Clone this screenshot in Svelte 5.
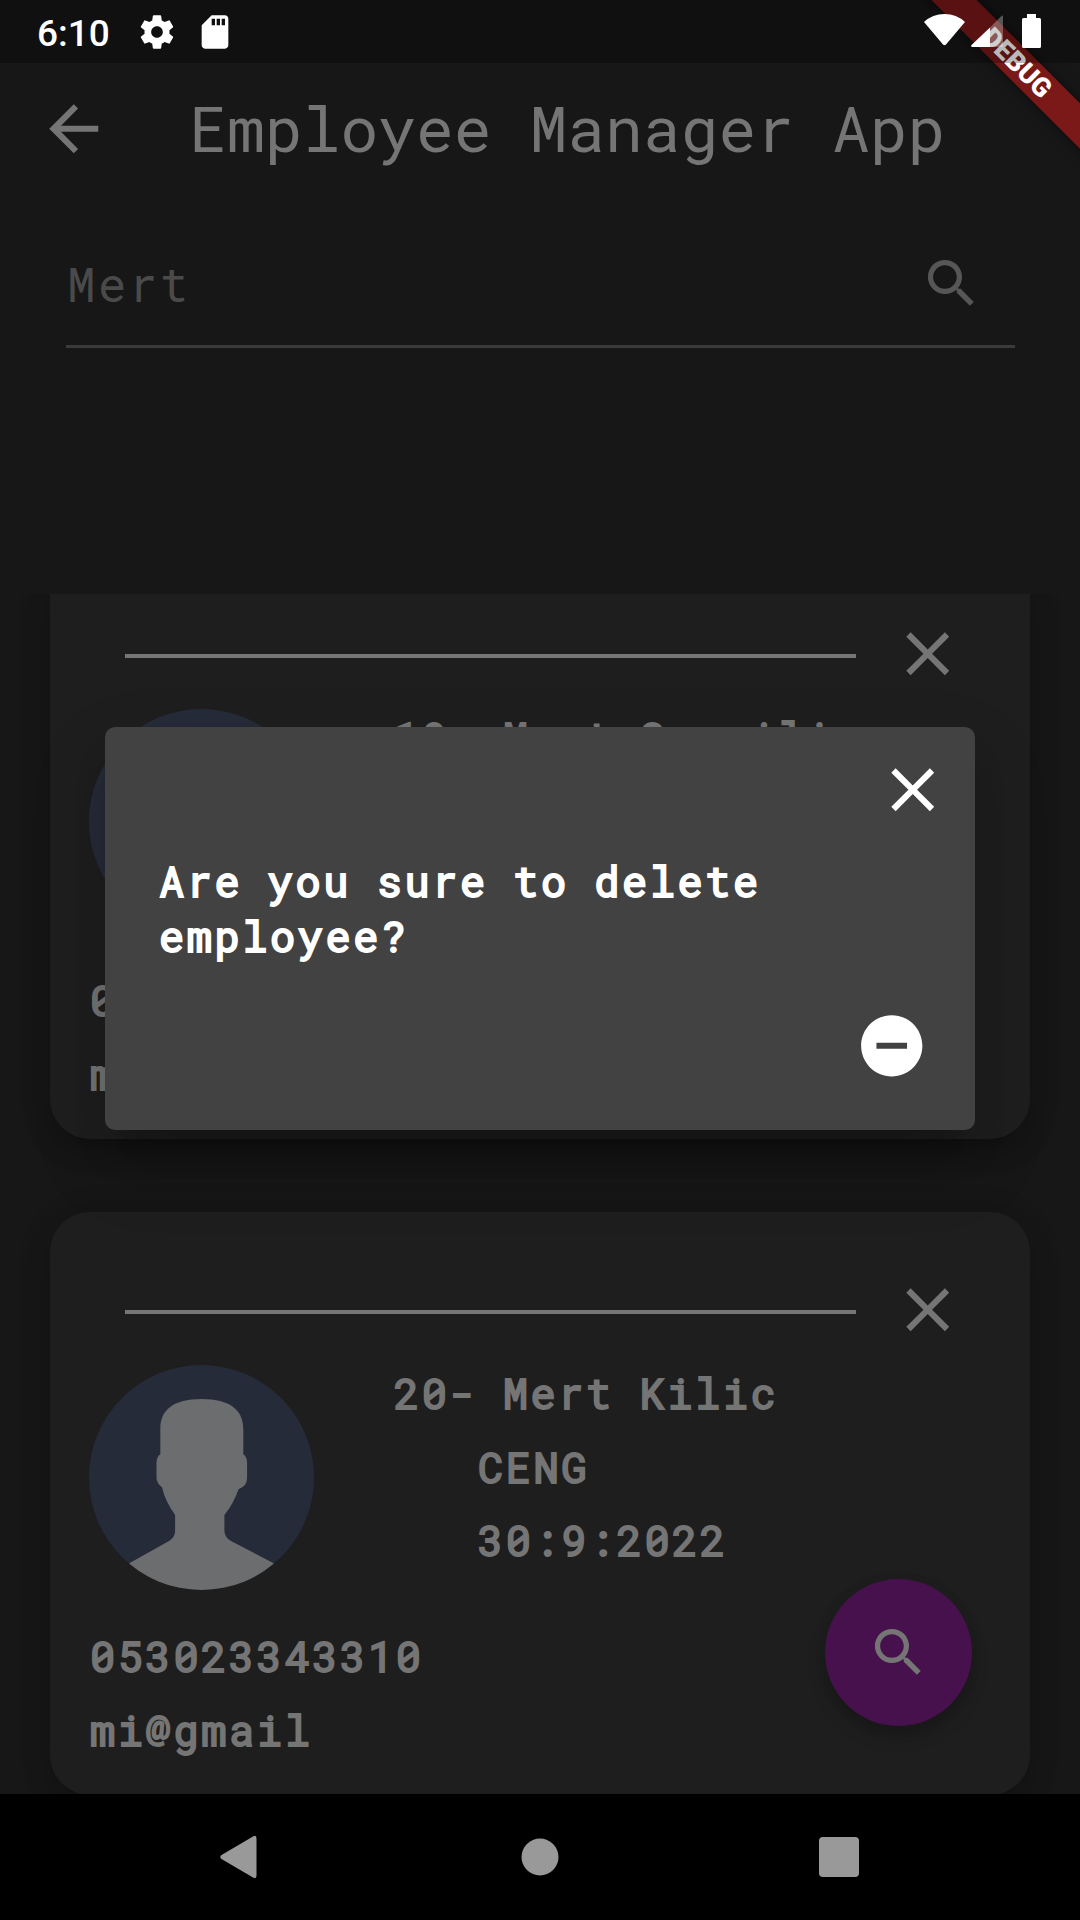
<script>
  const employees = [
    { id: 19, name: 'Mert Sevgili', job: 'CENG', date: '30:9:2022', phone: '053023343310', mail: 'mi@gmail' },
    { id: 20, name: 'Mert Kilic', job: 'CENG', date: '30:9:2022', phone: '053023343310', mail: 'mi@gmail' }
  ];
  const closePath =
    'M19 6.41 17.59 5 12 10.59 6.41 5 5 6.41 10.59 12 5 17.59 6.41 19 12 13.41 17.59 19 19 17.59 13.41 12z';
  const searchPath =
    'M15.5 14h-.79l-.28-.27A6.471 6.471 0 0 0 16 9.5 6.5 6.5 0 1 0 9.5 16c1.61 0 3.09-.59 4.23-1.57l.27.28v.79l5 4.99L20.49 19l-4.99-5zm-6 0C7.01 14 5 11.99 5 9.5S7.01 5 9.5 5 14 7.01 14 9.5 11.99 14 9.5 14z';
</script>

<div class="screen">
  <header class="status">
    <span class="clock">6:10</span>
    <svg class="gear" viewBox="0 0 24 24"><path d="M19.43 12.98c.04-.32.07-.64.07-.98s-.03-.66-.07-.98l2.11-1.65c.19-.15.24-.42.12-.64l-2-3.46c-.12-.22-.39-.3-.61-.22l-2.49 1c-.52-.4-1.08-.73-1.69-.98l-.38-2.65C14.46 2.18 14.25 2 14 2h-4c-.25 0-.46.18-.49.42l-.38 2.65c-.61.25-1.17.59-1.69.98l-2.49-1c-.23-.09-.49 0-.61.22l-2 3.46c-.13.22-.07.49.12.64l2.11 1.65c-.04.32-.07.65-.07.98s.03.66.07.98l-2.11 1.65c-.19.15-.24.42-.12.64l2 3.46c.12.22.39.3.61.22l2.49-1c.52.4 1.08.73 1.69.98l.38 2.65c.03.24.24.42.49.42h4c.25 0 .46-.18.49-.42l.38-2.65c.61-.25 1.17-.59 1.69-.98l2.49 1c.23.09.49 0 .61-.22l2-3.46c.12-.22.07-.49-.12-.64l-2.11-1.65zM12 15.5c-1.93 0-3.5-1.57-3.5-3.5s1.57-3.5 3.5-3.5 3.5 1.57 3.5 3.5-1.57 3.5-3.5 3.5z" /></svg>
    <svg class="sd" viewBox="0 0 24 24"><path d="M18 2h-8L4.02 8 4 20c0 1.100.9 2 2 2h12c1.100 0 2-.9 2-2V4c0-1.100-.9-2-2-2zm-6 6h-2V4h2v4zm3 0h-2V4h2v4zm3 0h-2V4h2v4z" /></svg>
    <div class="right">
      <svg class="wifi" viewBox="0 0 41 32"><path d="M0 8Q8.500 0 20.500 0T41 8L22 30.500Q20.500 32 19 30.500z" /></svg>
      <svg class="signal" viewBox="0 0 32 32"><path opacity=".3" d="M32 1.500Q32-.5 30 1.500L19 12.500V32H32z" /><path d="M19 12.500V32H1Q-.5 31.500.5 30z" /></svg>
      <svg class="battery" viewBox="0 0 19 34"><path d="M5 0h9v4h3.500Q19 4 19 5.500v27q0 1.500-1.500 1.500h-16Q0 34 0 32.500v-27Q0 4 1.500 4H5z" /></svg>
    </div>
  </header>

  <div class="appbar">
    <svg class="back" viewBox="0 0 24 24"><path d="M20 11H7.830l5.590-5.590L12 4l-8 8 8 8 1.410-1.410L7.830 13H20v-2z" /></svg>
    <h1>Employee Manager App</h1>
  </div>

  <div class="field">
    <span>Mert</span>
    <svg viewBox="0 0 24 24"><path d={searchPath} /></svg>
  </div>

  <main class="list">
    {#each employees as e}
      <article class="card">
        <div class="top">
          <div class="rule"></div>
          <svg viewBox="0 0 24 24"><path d={closePath} /></svg>
        </div>
        <div class="body">
          <svg class="avatar" viewBox="0 0 225 225">
            <path d="M71.300 64C71.300 45 84 34 112.600 34S154.300 45 154.300 64V89.300Q158.100 92 158.100 98V113Q158.100 121 149.500 124.300Q145 138 135.400 150V166Q136 173 142 176L184.600 198.300V225H40.300V198.300L80 176Q86.100 172 86.100 166V150Q76 136 73 122.300Q67.500 118 67.500 113V98Q67.500 92 71.300 89.300z" />
          </svg>
          <div class="info">
            <p>{e.id}- {e.name}</p>
            <p class="sub">{e.job}</p>
            <p class="sub">{e.date}</p>
          </div>
        </div>
        <div class="contact">
          <p>{e.phone}</p>
          <p>{e.mail}</p>
        </div>
      </article>
    {/each}
  </main>

  <button class="fab" aria-label="Search">
    <svg viewBox="0 0 24 24"><path d={searchPath} /></svg>
  </button>

  <nav>
    <svg viewBox="0 0 64 64"><path d="M47.500 13.500V50.500Q47.500 54.500 44 52.500L12.500 34Q10 32 12.500 30L44 11.500Q47.500 9.500 47.500 13.500z" /></svg>
    <svg viewBox="0 0 64 64"><circle cx="32" cy="32" r="18.500" /></svg>
    <svg viewBox="0 0 64 64"><rect x="12" y="12" width="40" height="40" rx="4" /></svg>
  </nav>

  <div class="overlay">
    <section class="dialog">
      <div class="dtop"><svg viewBox="0 0 24 24"><path d={closePath} /></svg></div>
      <p class="question">Are you sure to delete employee?</p>
      <div class="actions">
        <svg viewBox="0 0 24 24"><path d="M12 2C6.480 2 2 6.480 2 12s4.480 10 10 10 10-4.480 10-10S17.520 2 12 2zm5 11H7v-2h10v2z" /></svg>
      </div>
    </section>
  </div>

  <div class="corner"><div class="banner">DEBUG</div></div>
</div>

<style>
  :global(body) { margin: 0; background: #000; }
  .screen {
    position: relative;
    width: 1080px;
    height: 1920px;
    overflow: hidden;
    display: flex;
    flex-direction: column;
    background: #171717;
    color: #757575;
    font-family: 'Roboto Mono', 'DejaVu Sans Mono', monospace;
  }
  svg { display: block; flex: none; fill: currentColor; }
  p, h1 { margin: 0; }

  .status {
    position: relative;
    z-index: 4;
    flex: none;
    height: 63px;
    box-sizing: border-box;
    display: flex;
    align-items: flex-start;
    padding: 0 39px 0 37px;
    background: rgba(0, 0, 0, 0.27);
    color: #fff;
  }
  .clock { width: 100px; font: 500 37px/67px Roboto, sans-serif; }
  .gear { width: 40px; height: 40px; margin-top: 12px; }
  .sd { width: 40px; height: 40px; margin: 12px 0 0 18px; }
  .right { margin-left: auto; display: flex; padding-top: 14px; }
  .wifi { width: 41px; height: 32px; }
  .signal { width: 32px; height: 32px; margin: 1px 0 0 6px; }
  .battery { width: 19px; height: 34px; margin-left: 19px; }

  .appbar { flex: none; height: 131px; display: flex; align-items: center; padding-left: 36.500px; }
  .back { width: 73.500px; height: 73.500px; }
  h1 { margin: -2px 0 0 79.200px; font-size: 63px; line-height: 80px; font-weight: 400; white-space: nowrap; }

  .field {
    flex: none;
    height: 151px;
    margin: 0 65.500px;
    border-bottom: 3px solid #3a3a3a;
    display: flex;
    justify-content: space-between;
    align-items: center;
    color: #4a4a4a;
  }
  .field span { font-size: 47.250px; letter-spacing: 2.600px; padding: 28px 0 0 1.500px; }
  .field svg { width: 63px; height: 63px; margin: 28px 32px 0 0; color: #565656; }

  .list { height: 1200px; margin-top: 246px; overflow: hidden; flex: none; display: flex; flex-direction: column; gap: 73px; }
  .card {
    flex: none;
    width: 980px;
    height: 583px;
    margin-left: 50px;
    border-radius: 40px;
    background: #1e1e1e;
    box-shadow: 0 14px 28px -4px rgba(0, 0, 0, 0.26), 0 4px 36px rgba(0, 0, 0, 0.1);
  }
  .card:first-child { margin-top: -38px; }
  .top { display: flex; align-items: center; padding: 60.500px 0 0 75px; gap: 34.800px; }
  .rule { width: 731px; height: 4px; margin-top: 5px; background: #757575; }
  .top svg { width: 73.500px; height: 73.500px; }
  .body { display: flex; height: 263px; margin-top: 10.400px; padding-left: 39px; }
  .avatar { width: 225px; height: 225px; margin-top: 8.600px; border-radius: 50%; background: #262b39; color: #6b6d6e; }
  .info { margin-left: 80px; }
  /* Emboldened regular weight: outlined glyphs with tighter word gaps */
  .card p, .question {
    font-size: 42px;
    font-weight: 400;
    letter-spacing: 2.600px;
    word-spacing: -2.200px;
    -webkit-text-stroke: 1.900px currentColor;
  }
  .card p { line-height: 73.300px; white-space: nowrap; }
  .info .sub { margin-left: 84px; }
  .contact { padding-left: 40px; }

  .fab {
    position: absolute;
    left: 825px;
    top: 1578.500px;
    width: 147px;
    height: 147px;
    padding: 0;
    border: 0;
    border-radius: 50%;
    display: grid;
    place-items: center;
    background: #46114d;
    color: #757575;
    box-shadow: 0 10px 18px rgba(0, 0, 0, 0.2), 0 2px 14px rgba(0, 0, 0, 0.06);
  }
  .fab svg { width: 63px; height: 63px; }

  nav { flex: none; height: 126px; background: #000; color: #999; display: flex; align-items: center; justify-content: center; gap: 235px; padding-right: 1px; }
  nav svg { width: 64px; height: 64px; }

  .overlay { position: absolute; inset: 63px 0 126px; overflow: hidden; display: flex; align-items: center; justify-content: center; }
  .dialog {
    width: 870px;
    height: 403.500px;
    border-radius: 10px;
    background: #424242;
    color: #fff;
    box-shadow: 0 28px 36px -12px rgba(0, 0, 0, 0.25), 0 32px 80px rgba(0, 0, 0, 0.14);
  }
  .dtop { display: flex; justify-content: flex-end; padding: 26px 26px 0 0; }
  .dtop svg, .actions svg { width: 73.500px; height: 73.500px; }
  .question { margin: 26.500px 0 0 54px; line-height: 55px; width: 700px; }
  .card .info p, .question { letter-spacing: 2.550px; }
  .actions { display: flex; justify-content: flex-end; padding: 46.500px 47px 0 0; }

  .corner { position: absolute; right: 0; top: 0; width: 200px; height: 200px; overflow: hidden; z-index: 3; }
  .banner {
    position: absolute;
    left: -13px;
    top: 47px;
    width: 300px;
    height: 32px;
    transform: rotate(45deg);
    background: #7b1818;
    color: #fff;
    text-align: center;
    font: 900 26.800px/32px Roboto, sans-serif;
    box-shadow: 0 0 14px rgba(0, 0, 0, 0.5);
  }
</style>
